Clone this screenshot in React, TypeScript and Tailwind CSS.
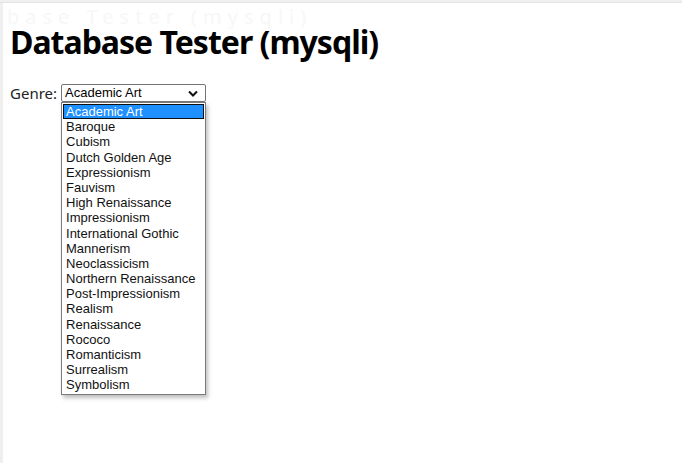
import React from "react";

const genres = [
  "Academic Art",
  "Baroque",
  "Cubism",
  "Dutch Golden Age",
  "Expressionism",
  "Fauvism",
  "High Renaissance",
  "Impressionism",
  "International Gothic",
  "Mannerism",
  "Neoclassicism",
  "Northern Renaissance",
  "Post-Impressionism",
  "Realism",
  "Renaissance",
  "Rococo",
  "Romanticism",
  "Surrealism",
  "Symbolism",
];

export default function App() {
  return (
    <div className="w-[682px] h-[463px] bg-white overflow-hidden relative">
      <div className="h-[3px] bg-[#f0f0f0] border-b border-[#e4e4e4]" />
      <div className="flex h-[460px]">
        <div className="w-[3px] bg-[#efefef]" />
        <div className="flex-1 relative pl-[7px]">
          <div
            aria-hidden="true"
            className="absolute left-[4px] top-[4px] h-[20px] text-[20px] text-[#f7f7f7] leading-[20px] tracking-[6px] whitespace-nowrap"
            style={{ fontFamily: '"Noto Sans", sans-serif' }}
          >
            base Tester (mysqli)
          </div>
          <h1
            className="relative mt-[25px] text-[32px] font-bold text-black leading-[28px] tracking-[-1px] whitespace-nowrap"
            style={{ fontFamily: '"Noto Sans", sans-serif' }}
          >
            Database Tester (mysqli)
          </h1>
          <div className="flex items-start mt-[28px]">
            <span
              className="text-[15px] text-[#222] leading-[18px] mr-[4px]"
              style={{ fontFamily: '"Noto Sans", sans-serif' }}
            >
              Genre:
            </span>
            <div className="relative" style={{ fontFamily: '"Liberation Sans", Arial, sans-serif' }}>
              <div className="w-[145px] h-[18px] border border-[#767676] rounded-[2px] bg-white flex items-center pl-[3px] text-[13px] text-black">
                <span className="flex-1">Academic Art</span>
                <svg width="10" height="7" viewBox="0 0 10 7" className="mr-[7px]">
                  <path d="M1 1.5 L5 5.5 L9 1.5" stroke="#111" strokeWidth="2" fill="none" />
                </svg>
              </div>
              <div className="absolute left-0 top-[18px] w-[145px] bg-white border border-[#7a7a7a] shadow-[2px_3px_4px_rgba(0,0,0,0.25)] py-[1px] px-[1px]">
                {genres.map((g, i) => (
                  <div
                    key={g}
                    className={
                      i === 0
                        ? "h-[15.2px] leading-[13px] text-[13px] text-white bg-[#1e90ff] border border-[#101010] pl-[2px] whitespace-nowrap"
                        : "h-[15.2px] leading-[15.2px] text-[13px] text-[#111] pl-[3px] whitespace-nowrap"
                    }
                  >
                    {g}
                  </div>
                ))}
              </div>
            </div>
          </div>
        </div>
      </div>
    </div>
  );
}
